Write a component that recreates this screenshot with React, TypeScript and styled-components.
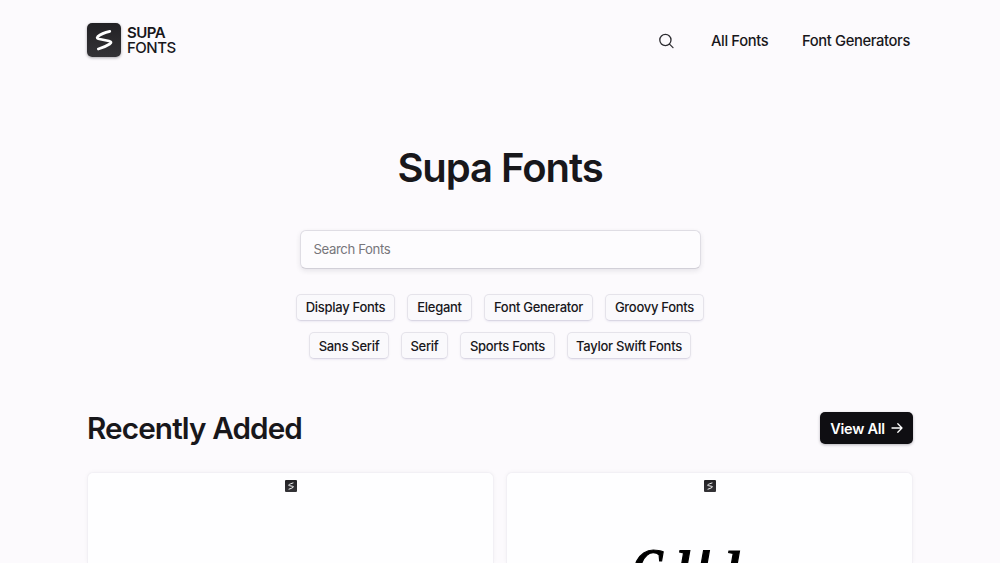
import React from "react";
import styled, { createGlobalStyle } from "styled-components";

const GlobalStyle = createGlobalStyle`
  * { box-sizing: border-box; }
  body {
    margin: 0;
    height: 563px;
    overflow: hidden;
    background: #fcfafd;
    color: #18171b;
    font-family: Inter, "Liberation Sans", sans-serif;
  }
`;

const Page = styled.div`
  height: 563px;
  overflow: hidden;
  padding: 0 87px;
`;

const Header = styled.header`
  height: 80px;
  display: flex;
  align-items: center;
  justify-content: space-between;
`;

const Brand = styled.a`
  display: flex;
  align-items: center;
  gap: 6px;
`;

const BrandMark = styled.span<{ $size: number }>`
  display: block;
  width: ${(p) => p.$size}px;
  height: ${(p) => p.$size}px;
  border-radius: ${(p) => (p.$size > 20 ? 5 : 1)}px;
  background: linear-gradient(#222124, #343337);
  box-shadow: ${(p) => (p.$size > 20 ? "0 1px 3px rgba(20, 18, 30, 0.35)" : "none")};
  svg { display: block; width: 100%; height: 100%; }
`;

const BrandName = styled.span`
  display: flex;
  flex-direction: column;
  font-size: 15px;
  line-height: 15px;
  letter-spacing: -0.5px;
`;

const BrandWord = styled.span<{ $strong?: boolean }>`
  font-weight: ${(p) => (p.$strong ? 600 : 450)};
`;

const Nav = styled.nav`
  display: flex;
  align-items: center;
  padding: 1px 3px 0 0;
  font-size: 14.75px;
  line-height: 20px;
  font-weight: 500;
  svg { display: block; margin-right: 37px; }
`;

const NavLink = styled.a<{ $width: number }>`
  width: ${(p) => p.$width}px;
  padding-top: 1px;
  white-space: nowrap;
  letter-spacing: -0.37px;
  & + & { margin-left: 33px; }
`;

const Hero = styled.section`
  display: flex;
  flex-direction: column;
  align-items: center;
  padding-top: 63px;
`;

const Title = styled.h1`
  margin: 0;
  font-size: 40px;
  line-height: 50px;
  font-weight: 600;
  letter-spacing: -1.05px;
`;

const SearchInput = styled.input`
  margin-top: 37px;
  width: 401px;
  height: 39px;
  padding: 0 13px 1px;
  border: 1px solid #dfdde4;
  border-bottom-color: #d2d0d8;
  border-radius: 6px;
  background: #fdfcfe;
  box-shadow: 0 2px 5px rgba(40, 35, 60, 0.1);
  font: 400 13.2px Inter, "Liberation Sans", sans-serif;
  letter-spacing: -0.4px;
  outline: none;
  &::placeholder { color: #77767b; opacity: 1; }
`;

const Tags = styled.div`
  margin-top: 25px;
  display: flex;
  flex-direction: column;
  align-items: center;
  gap: 11px;
`;

const TagRow = styled.div`
  display: flex;
  gap: 12px;
`;

const Tag = styled.a<{ $width: number }>`
  width: ${(p) => p.$width}px;
  height: 27px;
  display: flex;
  align-items: center;
  justify-content: center;
  padding-bottom: 1px;
  border: 1px solid #e5e3ea;
  border-bottom-color: #dad7e4;
  border-radius: 5px;
  background: #faf9fc;
  box-shadow: 0 1px 2px rgba(70, 55, 130, 0.08);
  font-size: 13px;
  font-weight: 500;
  letter-spacing: -0.28px;
  white-space: nowrap;
  ${TagRow}:last-child & { padding-bottom: 0; }
`;

const SectionHeader = styled.div`
  margin-top: 53px;
  height: 32px;
  display: flex;
  align-items: center;
  justify-content: space-between;
`;

const SectionTitle = styled.h2`
  margin: 0;
  font-size: 29.7px;
  line-height: 34px;
  font-weight: 600;
  letter-spacing: -0.88px;
`;

const ViewAll = styled.a`
  width: 93px;
  height: 32px;
  display: flex;
  align-items: center;
  justify-content: center;
  gap: 6px;
  border-radius: 5px;
  background: #0f0e12;
  box-shadow: 0 1px 3px rgba(20, 18, 30, 0.3);
  color: #fff;
  font-size: 14.5px;
  font-weight: 600;
  letter-spacing: -0.3px;
  white-space: nowrap;
`;

const Cards = styled.div`
  margin-top: 28px;
  display: grid;
  grid-template-columns: 1fr 1fr;
  gap: 12px;
`;

const Card = styled.article`
  height: 91px;
  padding-top: 7px;
  display: flex;
  flex-direction: column;
  align-items: center;
  overflow: hidden;
  border: 1px solid #f2f0f5;
  border-bottom: 0;
  border-radius: 6px 6px 0 0;
  background: #fefeff;
  box-shadow: 0 0 4px rgba(40, 35, 60, 0.04);
`;

const Specimen = styled.div`
  margin-top: 13px;
  margin-right: 31px;
  color: #000;
  font: italic 400 72px/110px "Liberation Serif", serif;
  letter-spacing: 12px;
  -webkit-text-stroke: 1.2px #000;
  white-space: nowrap;
`;

const Mark = ({ size }: { size: number }) => (
  <BrandMark $size={size}>
    <svg viewBox="0 0 34 34" fill="none" stroke="#fff" strokeWidth="2.7" strokeLinecap="round" strokeLinejoin="round">
      <path d="M22.8 8.4C18.5 9.4 13 11.7 10.7 13.6C9.5 14.8 10.3 15.5 12.3 16L22 18C24.6 18.8 24.7 19.7 22.7 21C19.8 22.9 15.5 24.8 11.3 26" />
    </svg>
  </BrandMark>
);

const tagRows: [string, number][][] = [
  [["Display Fonts", 99], ["Elegant", 65], ["Font Generator", 109], ["Groovy Fonts", 99]],
  [["Sans Serif", 80], ["Serif", 47], ["Sports Fonts", 95], ["Taylor Swift Fonts", 124]],
];

export default function App() {
  return (
    <>
      <GlobalStyle />
      <Page>
        <Header>
          <Brand>
            <Mark size={34} />
            <BrandName>
              <BrandWord $strong>SUPA</BrandWord>
              <BrandWord>FONTS</BrandWord>
            </BrandName>
          </Brand>
          <Nav>
            <svg width="16" height="16" viewBox="0 0 16 16" fill="none" stroke="#2c2b30" strokeWidth="1.3" strokeLinecap="round">
              <circle cx="7.4" cy="7" r="5.6" />
              <path d="M11.5 11.1L15 14.6" />
            </svg>
            <NavLink $width={58}>All Fonts</NavLink>
            <NavLink $width={108}>Font Generators</NavLink>
          </Nav>
        </Header>
        <Hero>
          <Title>Supa Fonts</Title>
          <SearchInput placeholder="Search Fonts" />
          <Tags>
            {tagRows.map((row, i) => (
              <TagRow key={i}>
                {row.map(([name, width]) => <Tag key={name} $width={width}>{name}</Tag>)}
              </TagRow>
            ))}
          </Tags>
        </Hero>
        <SectionHeader>
          <SectionTitle>Recently Added</SectionTitle>
          <ViewAll>
            View All
            <svg width="12" height="12" viewBox="0 0 12 12" fill="none" stroke="#fff" strokeWidth="1.3" strokeLinecap="round" strokeLinejoin="round">
              <path d="M1 6H11M6.8 1.8L11 6L6.8 10.2" />
            </svg>
          </ViewAll>
        </SectionHeader>
        <Cards>
          <Card><Mark size={12} /></Card>
          <Card>
            <Mark size={12} />
            <Specimen>cuı</Specimen>
          </Card>
        </Cards>
      </Page>
    </>
  );
}
